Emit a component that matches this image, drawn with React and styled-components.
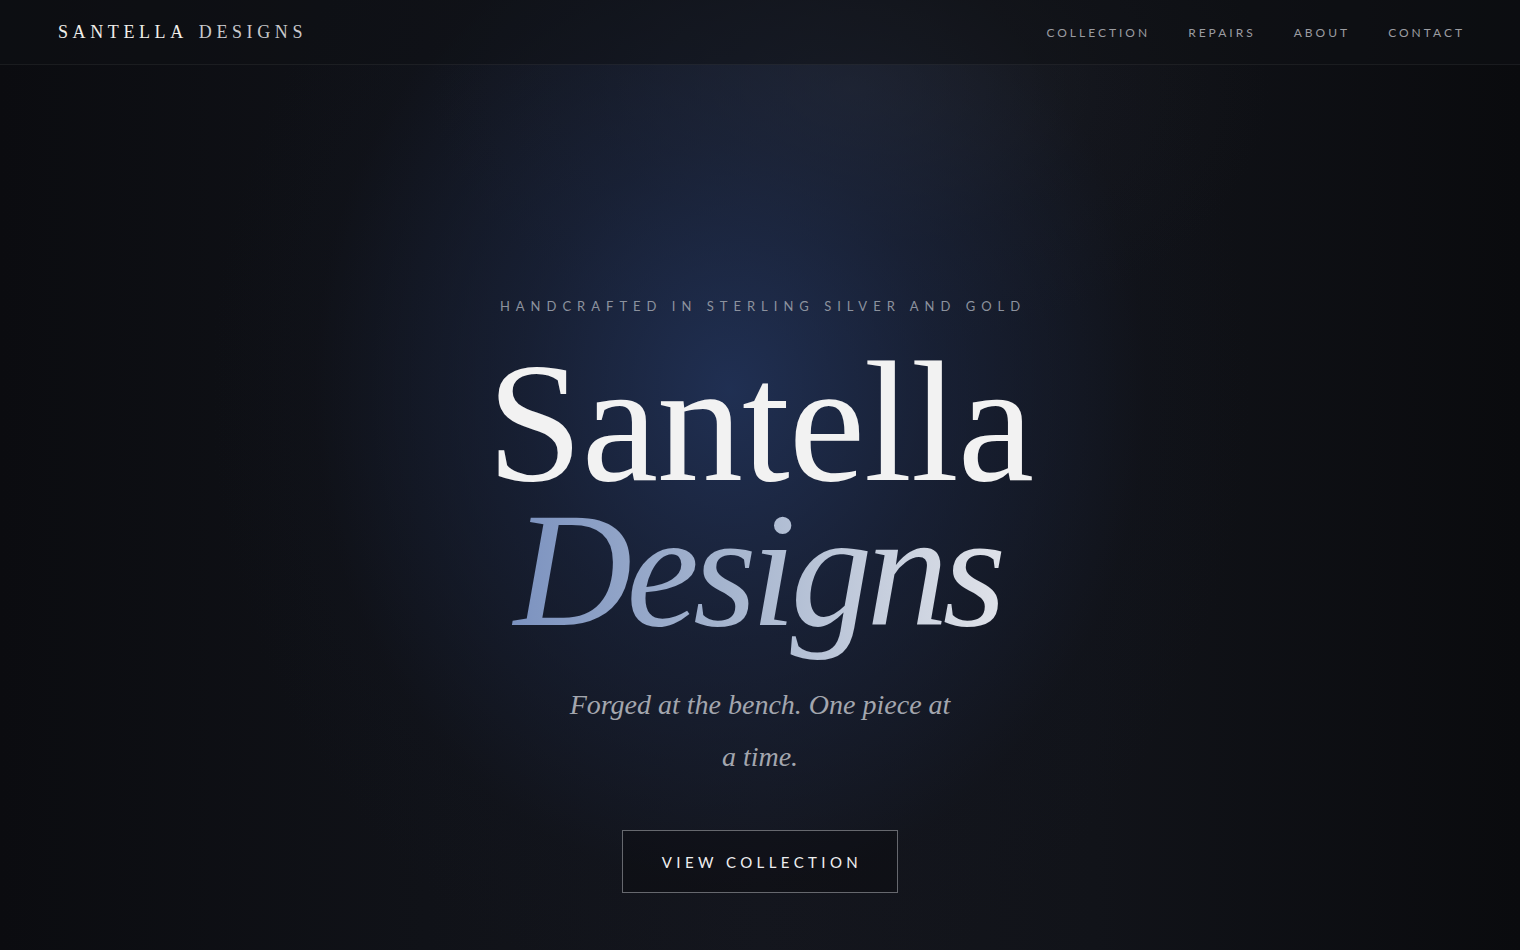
import React from "react";
import styled, { createGlobalStyle } from "styled-components";

const Global = createGlobalStyle`
  html, body { margin: 0; padding: 0; background: #0d0e12; }
  * { box-sizing: border-box; }
`;

const Page = styled.div`
  min-height: 950px;
  display: flex;
  flex-direction: column;
  background:
    radial-gradient(ellipse 520px 620px at 730px 390px, rgba(34, 52, 92, 0.85) 0%, rgba(27, 39, 68, 0.6) 40%, rgba(18, 22, 34, 0.2) 80%, rgba(13,14,18,0) 100%),
    radial-gradient(ellipse 420px 260px at 850px 90px, rgba(44, 46, 52, 0.55) 0%, rgba(30, 32, 38, 0.2) 60%, rgba(20,20,24,0) 100%),
    linear-gradient(90deg, #0b0c10 0%, #101218 28%, #14161d 50%, #111319 72%, #0a0b0e 100%);
`;

const Header = styled.header`
  height: 65px;
  display: flex;
  align-items: center;
  justify-content: space-between;
  padding: 0 58px;
  border-bottom: 1px solid rgba(255, 255, 255, 0.06);
  background: rgba(14, 15, 19, 0.5);
`;

const Logo = styled.div`
  font-family: "Liberation Serif", serif;
  font-size: 18px;
  letter-spacing: 4.6px;
  display: flex;
  gap: 11px;
`;

const LogoPart = styled.span`
  color: ${(p) => (p.$muted ? "#c9c9cc" : "#f0eeea")};
`;

const Nav = styled.nav`
  display: flex;
  gap: 41px;
`;

const NavLink = styled.a`
  font-family: "Lato", sans-serif;
  font-size: 12px;
  letter-spacing: 3px;
  color: #9b9ca1;
  text-decoration: none;
  margin-right: -3px;
`;

const Hero = styled.main`
  flex: 1;
  display: flex;
  flex-direction: column;
  align-items: center;
  padding-top: 233px;
`;

const Eyebrow = styled.p`
  margin: 0;
  font-family: "Lato", sans-serif;
  font-size: 13px;
  letter-spacing: 6px;
  color: #8c929e;
  margin-right: -6px;
`;

const Title = styled.h1`
  margin: 34px 0 0;
  font-family: "Liberation Serif", serif;
  font-weight: 400;
  font-size: 172px;
  line-height: 148px;
  text-align: center;
  letter-spacing: -1px;
  display: flex;
  flex-direction: column;
  align-items: center;
`;

const TitleMain = styled.span`
  color: #f2f2f2;
`;

const TitleItalic = styled.span`
  font-style: italic;
  font-size: 164px;
  letter-spacing: -6px;
  background: linear-gradient(90deg, #7a91bf 0%, #a7b6cf 45%, #e2e4ea 100%);
  -webkit-background-clip: text;
  background-clip: text;
  color: transparent;
  padding: 0 16px 40px 10px;
  margin-bottom: -40px;
`;

const Tagline = styled.p`
  margin: 35px 0 0;
  max-width: 400px;
  font-family: "Liberation Serif", serif;
  font-style: italic;
  font-size: 28px;
  line-height: 52px;
  color: #a3a6ae;
  text-align: center;
`;

const Button = styled.a`
  margin-top: 47px;
  width: 276px;
  height: 63px;
  display: flex;
  align-items: center;
  justify-content: center;
  border: 1px solid #66686e;
  font-family: "Lato", sans-serif;
  font-size: 15px;
  letter-spacing: 4.4px;
  color: #eeeef0;
  text-decoration: none;
  background: rgba(12, 12, 16, 0.45);
  padding-left: 4px;
`;

export default function App() {
  return (
    <>
      <Global />
      <Page>
        <Header>
          <Logo>
            <LogoPart>SANTELLA</LogoPart>
            <LogoPart $muted>DESIGNS</LogoPart>
          </Logo>
          <Nav>
            <NavLink href="#">COLLECTION</NavLink>
            <NavLink href="#">REPAIRS</NavLink>
            <NavLink href="#">ABOUT</NavLink>
            <NavLink href="#">CONTACT</NavLink>
          </Nav>
        </Header>
        <Hero>
          <Eyebrow>HANDCRAFTED IN STERLING SILVER AND GOLD</Eyebrow>
          <Title>
            <TitleMain>Santella</TitleMain>
            <TitleItalic>Designs</TitleItalic>
          </Title>
          <Tagline>Forged at the bench. One piece at a time.</Tagline>
          <Button href="#">VIEW COLLECTION</Button>
        </Hero>
      </Page>
    </>
  );
}
